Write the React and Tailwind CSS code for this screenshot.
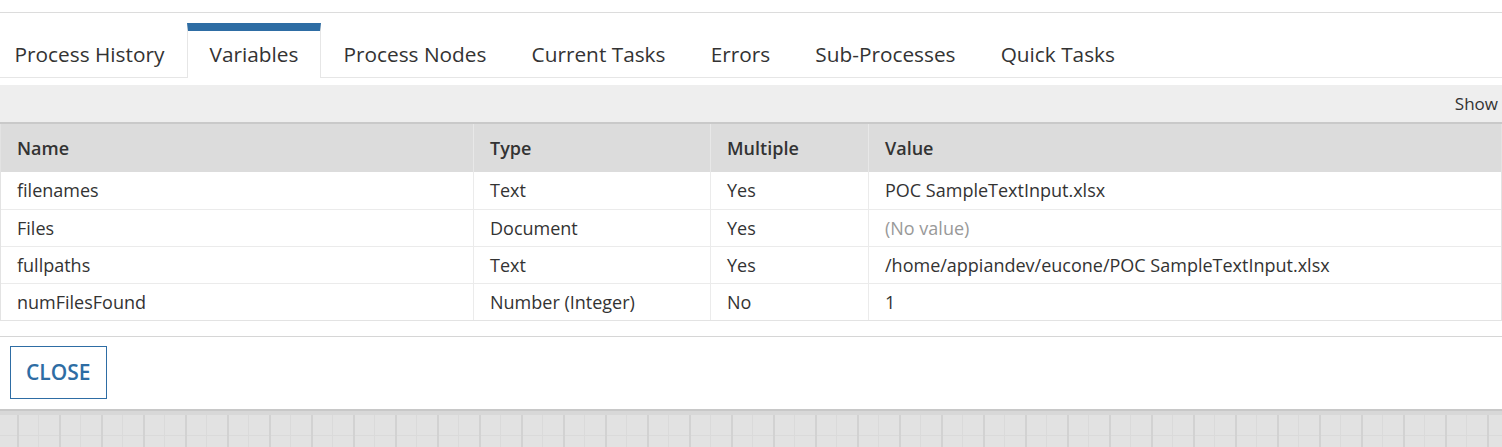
import React from "react";

const tabs = [
  "Process History",
  "Variables",
  "Process Nodes",
  "Current Tasks",
  "Errors",
  "Sub-Processes",
  "Quick Tasks",
];

const variables = [
  { name: "filenames", type: "Text", multiple: "Yes", value: "POC SampleTextInput.xlsx" },
  { name: "Files", type: "Document", multiple: "Yes", value: null },
  { name: "fullpaths", type: "Text", multiple: "Yes", value: "/home/appiandev/eucone/POC SampleTextInput.xlsx" },
  { name: "numFilesFound", type: "Number (Integer)", multiple: "No", value: "1" },
];

const cols = "grid grid-cols-[473px_237px_158px_1fr]";

export default function App() {
  const active = "Variables";

  return (
    <div className="w-[1502px] h-[447px] overflow-hidden bg-white text-[#333] font-['Open_Sans',sans-serif]">
      <div className="h-[13px] border-b border-[#dcdcdc]" />

      {/* tab strip */}
      <div className="pt-[10px] border-b border-[#e6e6e6]">
        <div className="flex -ml-[8px] h-[54px]">
          {tabs.map((tab) =>
            tab === active ? (
              <div
                key={tab}
                className="relative -mb-px flex items-center px-[21.6px] pt-px bg-white border-x border-[#e6e6e6] text-[20.8px] border-t-[8px] border-t-[#2e6da4]"
              >
                {tab}
              </div>
            ) : (
              <div
                key={tab}
                className="flex items-center px-[21.6px] pt-px border-t-[8px] border-t-transparent border-x border-x-transparent text-[20.8px]"
              >
                {tab}
              </div>
            )
          )}
        </div>
      </div>

      <div className="h-[7px]" />

      {/* toolbar */}
      <div className="h-[39px] bg-[#eeeeee] border-b-2 border-[#c9c9c9] flex items-center justify-end text-[17px] pr-[4px]">
        <span>Show</span>
      </div>

      {/* variables table */}
      <div className="border-x border-b border-[#e3e3e3] text-[18px]">
        <div className={`${cols} h-[48px] bg-[#dcdcdc] font-semibold`}>
          <div className="flex items-center px-4 border-r border-[#e8e8e8]">Name</div>
          <div className="flex items-center px-4 border-r border-[#e8e8e8]">Type</div>
          <div className="flex items-center px-4 border-r border-[#e8e8e8]">Multiple</div>
          <div className="flex items-center px-4">Value</div>
        </div>
        {variables.map((v, i) => (
          <div
            key={v.name}
            className={`${cols} h-[37px] ${i > 0 ? "border-t border-[#ebebeb]" : ""}`}
          >
            <div className="flex items-center px-4 border-r border-[#ebebeb]">{v.name}</div>
            <div className="flex items-center px-4 border-r border-[#ebebeb]">{v.type}</div>
            <div className="flex items-center px-4 border-r border-[#ebebeb]">{v.multiple}</div>
            <div className="flex items-center px-4">
              {v.value ?? <span className="text-[#999]">(No value)</span>}
            </div>
          </div>
        ))}
      </div>

      <div className="h-[16px] border-b border-[#d6d6d6]" />

      {/* footer */}
      <div className="h-[72px] px-[10px] pt-[9px]">
        <button className="h-[53px] px-[15px] border border-[#2e6da4] text-[#2e6da4] text-[21px] font-semibold">
          CLOSE
        </button>
      </div>

      {/* designer canvas grid */}
      <div className="h-[40px] border-t-2 border-[#c8c8c8] bg-[#e2e2e2] bg-[linear-gradient(to_bottom,#d8d8d8_0,#d8d8d8_4px,transparent_4px),linear-gradient(to_right,#d2d2d2_0,#d2d2d2_2px,transparent_2px),linear-gradient(to_right,#dadada_0,#dadada_1px,transparent_1px),linear-gradient(to_bottom,transparent_24px,#dadada_24px,#dadada_25px,transparent_25px)] bg-[length:100%_100%,42px_100%,21px_100%,100%_100%] bg-[position:0_0,17px_0,38px_0,0_0]" />
    </div>
  );
}
